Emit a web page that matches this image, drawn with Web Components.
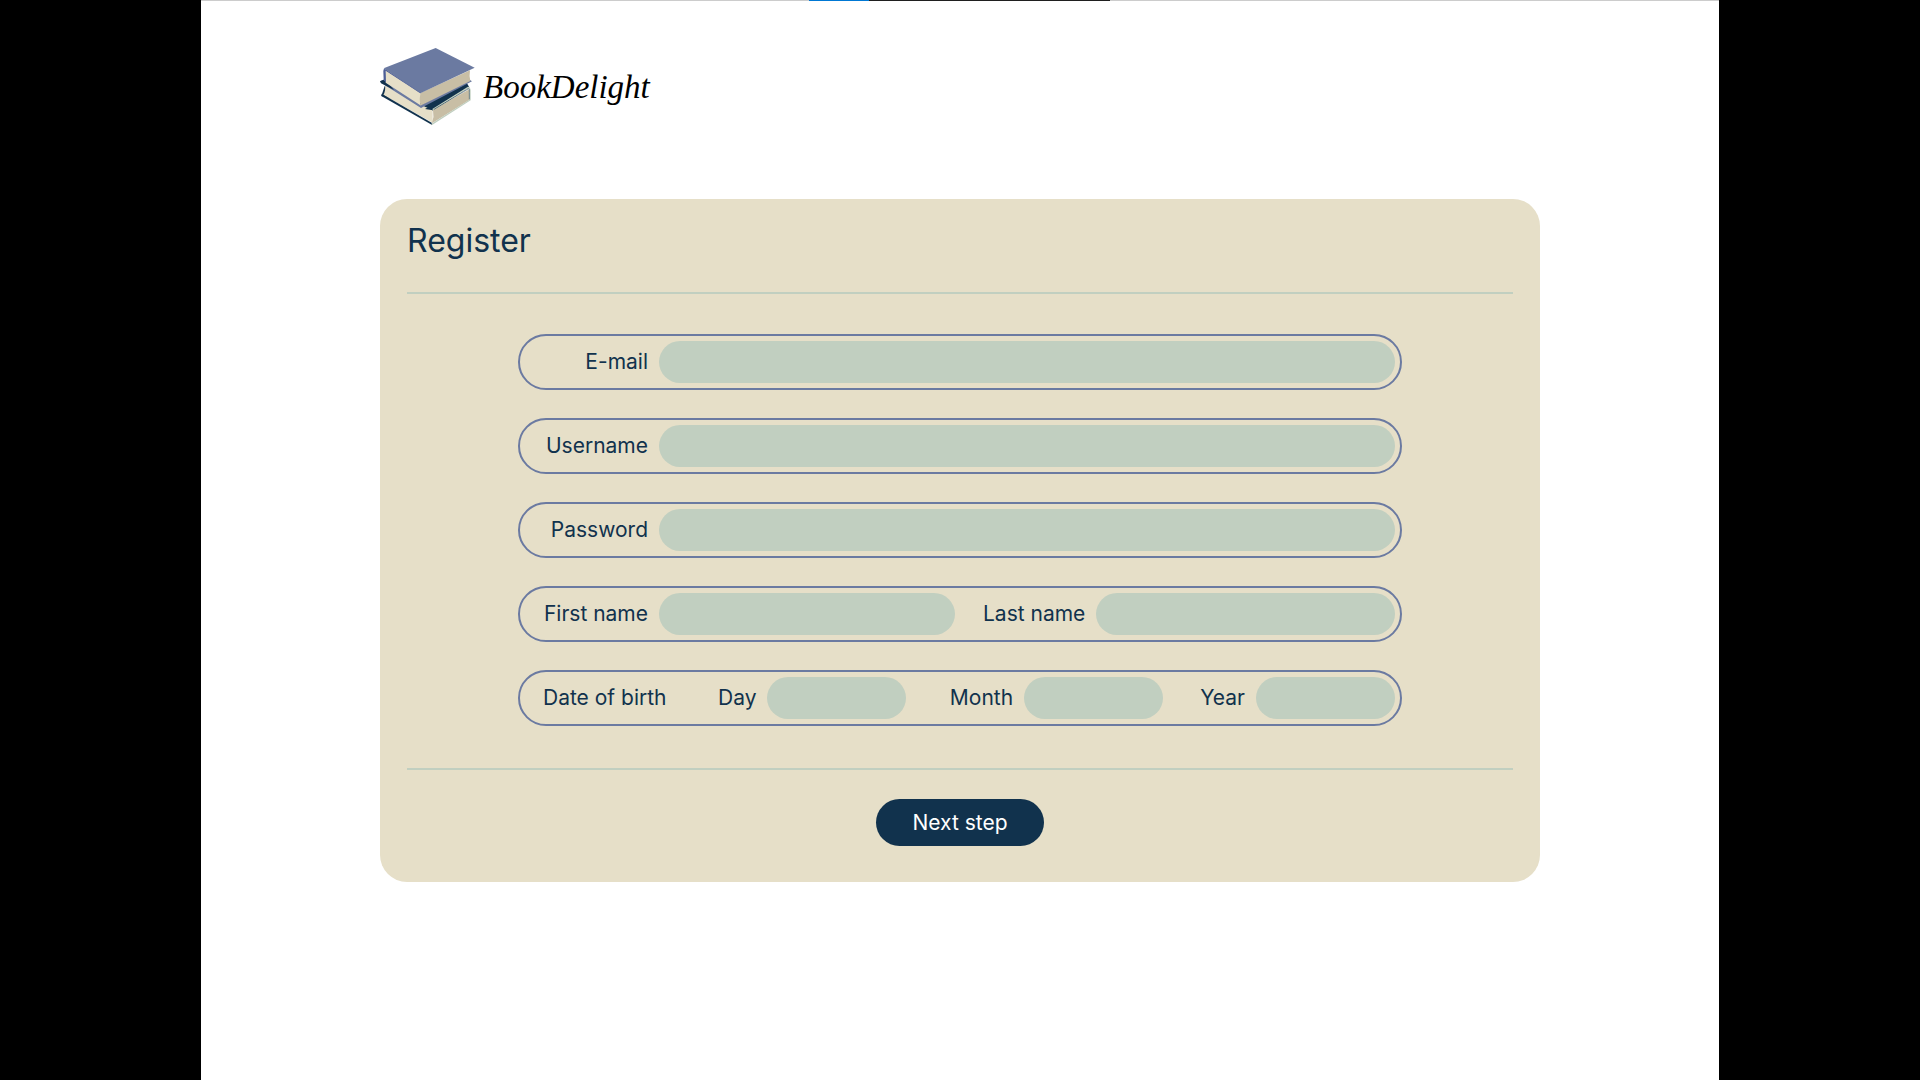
<!DOCTYPE html>
<html lang="en">
<head>
<meta charset="utf-8">
<title>BookDelight - Register</title>
<style>
body { margin: 0; background: #000; font-family: Inter, "Liberation Sans", sans-serif; color: #11324d; }
</style>
</head>
<body>
<book-page>
  <book-brand slot="header">BookDelight</book-brand>
  <register-card heading="Register">
    <form-row><text-field label="E-mail" type="email"></text-field></form-row>
    <form-row><text-field label="Username"></text-field></form-row>
    <form-row><text-field label="Password" type="password"></text-field></form-row>
    <form-row>
      <text-field label="First name"></text-field>
      <text-field label="Last name" size="natural"></text-field>
    </form-row>
    <form-row legend="Date of birth">
      <text-field label="Day" size="short"></text-field>
      <text-field label="Month" size="short"></text-field>
      <text-field label="Year" size="short"></text-field>
    </form-row>
    <pill-button slot="footer">Next step</pill-button>
  </register-card>
</book-page>
<script>
class BaseElement extends HTMLElement {
  connectedCallback() {
    if (this.shadowRoot) return;
    this.attachShadow({ mode: "open" }).innerHTML = this.render();
  }
}

customElements.define("book-page", class extends BaseElement {
  render() {
    return `<style>
      :host { display: block; padding: 0 201px; }
      .sheet { background: #fff; min-height: 100vh; box-sizing: border-box; }
      .edge { display: grid; grid-template-columns: 608px 60px 241px 1fr; height: 1px; background: #ccc; }
      .blue { grid-column: 2; background: #0078d4; }
      .dark { background: #1f1f1f; }
      header { padding: 46px 179px 0; height: 152px; box-sizing: content-box; }
      main { padding: 0 179px 48px; }
    </style>
    <div class="sheet">
      <div class="edge"><span class="blue"></span><span class="dark"></span></div>
      <header><slot name="header"></slot></header>
      <main><slot></slot></main>
    </div>`;
  }
});

customElements.define("book-brand", class extends BaseElement {
  render() {
    return `<style>
      :host { display: flex; align-items: center; gap: 8px; color: #000;
        font: italic 33px/40px "Liberation Serif", serif; }
      svg { display: block; width: 95px; height: 79px; }
    </style>
    <svg viewBox="30 21 285 237" aria-hidden="true">
      <path d="M34 168L44 138L150 190L290 128L298 142L187 212L165 205Z" fill="#11324d"/>
      <path d="M45 130L165 200L188 210L188 248L40 165Q48 150 45 134Z" fill="#e6dfc8"/>
      <path d="M165 207L290 136L298 142L189 211Z" fill="#11324d"/>
      <path d="M189 210L298 148L299 179L186 250Q193 230 189 210Z" fill="#c8bea5"/>
      <path d="M188 209L295 142Q301 145 300 156L300 180L184 254" fill="none" stroke="#c1cfc0" stroke-width="4"/>
      <path d="M192 208L296 146Q299 147 298 157L298 178" fill="none" stroke="#11324d" stroke-width="1.5"/>
      <path d="M35 161L185 248L185 254L34 168Z" fill="#11324d"/>
      <path d="M30 124L40 119L48 123L153 195L299 119L306 124L153 204L44 135Z" fill="#6b7aa1"/>
      <path d="M30 124L41 119L60 136L72 150L33 130Z" fill="#11324d"/>
      <path d="M47 88L151 159L150 195L47 128Q43 111 47 88Z" fill="#e6dfc8"/>
      <path d="M151 159L300 91Q297 108 301 123L151 197Q147 178 151 159Z" fill="#c8bea5"/>
      <path d="M41 85L197 24L314 83L151 160Z" fill="#6b7aa1"/>
      <path d="M151 158L46 88Q40 84 40 94L41 121L48 127L47 92L151 160Z" fill="#4d5e96"/>
    </svg>
    <span><slot></slot></span>`;
  }
});

customElements.define("register-card", class extends BaseElement {
  render() {
    return `<style>
      :host { display: block; background: #e6dfc8; border-radius: 27px; padding: 22px 27px 36px; }
      h1 { margin: 0; font-size: 32px; line-height: 40px; font-weight: 400; }
      hr { margin: 0; border: 0; height: 2px; background: #c1cfc0; }
      h1 + hr { margin-top: 31px; }
      .rows { display: flex; flex-direction: column; gap: 28px; padding: 40px 111px 42px; }
      footer { display: flex; justify-content: center; padding-top: 29px; }
    </style>
    <form onsubmit="return false">
      <h1>${this.getAttribute("heading")}</h1><hr>
      <div class="rows"><slot></slot></div>
      <hr><footer><slot name="footer"></slot></footer>
    </form>`;
  }
});

customElements.define("form-row", class extends BaseElement {
  render() {
    const legend = this.getAttribute("legend");
    return `<style>
      :host { display: block; box-sizing: border-box; height: 56px; border: 2px solid #6b7aa1; border-radius: 28px;
        padding: 0 5px 0 23px; font-size: 21px; line-height: 28px; }
      .row { display: flex; height: 100%; align-items: center; gap: 28px; }
      .dated { display: grid; grid-template-columns: 175px 1fr 1fr 1fr; gap: 0; }
      ::slotted(*) { flex: 1 1 0; }
      .dated ::slotted(:nth-child(1)) { justify-self: start; }
      .dated ::slotted(:nth-child(2)) { justify-self: center; }
      .dated ::slotted(:nth-child(3)) { justify-self: end; }
    </style>
    ${legend
      ? `<div class="row dated" role="group" aria-labelledby="legend"><span id="legend">${legend}</span><slot></slot></div>`
      : `<div class="row"><slot></slot></div>`}`;
  }
});

customElements.define("text-field", class extends BaseElement {
  render() {
    return `<style>
      :host { display: flex; align-items: center; gap: 11px; }
      label { min-width: 105px; text-align: right; white-space: nowrap; }
      input { flex: 1; min-width: 0; width: 100%; height: 42px; box-sizing: border-box; margin: 0; border: 0;
        border-radius: 21px; padding: 0 20px; background: #c1cfc0; color: inherit; font: inherit; outline-color: #11324d; }
      :host([size]) label { min-width: 0; }
      :host([size="short"]) input { flex: none; width: 139px; }
    </style>
    <label for="input">${this.getAttribute("label")}</label>
    <input id="input" type="${this.getAttribute("type") || "text"}">`;
  }
});

customElements.define("pill-button", class extends BaseElement {
  render() {
    return `<style>
      :host { display: block; }
      button { display: block; height: 47px; padding: 0 36px; border: 0; border-radius: 24px; background: #11324d;
        color: #fff; font: inherit; font-size: 21px; line-height: 28px; cursor: pointer; }
    </style>
    <button type="button"><slot></slot></button>`;
  }
});
</script>
</body>
</html>
